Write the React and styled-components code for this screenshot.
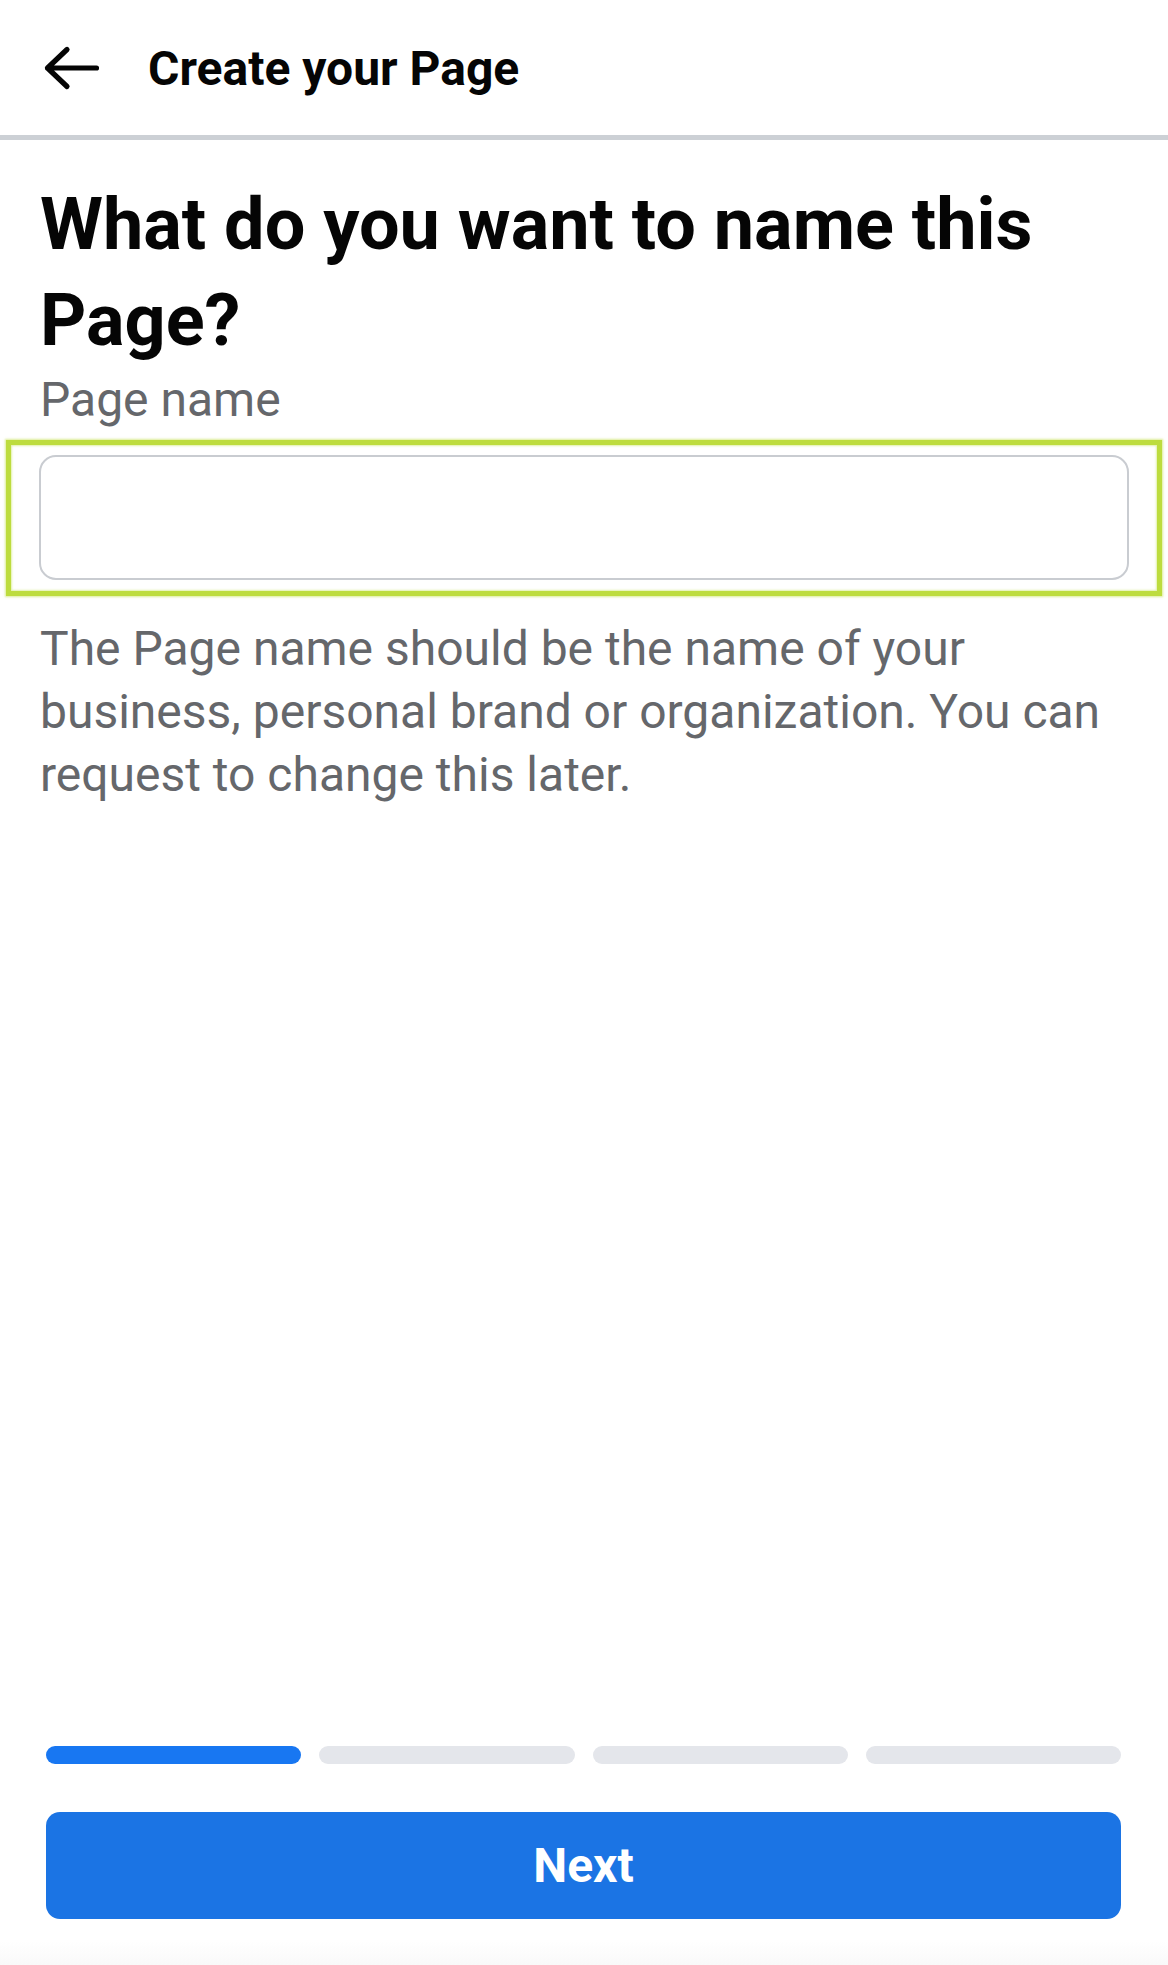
import React from "react";
import styled, { createGlobalStyle } from "styled-components";

const GlobalStyle = createGlobalStyle`
  html, body { margin: 0; padding: 0; background: #ffffff; }
  body { font-family: Roboto, "Noto Sans", "Liberation Sans", sans-serif; -webkit-font-smoothing: antialiased; }
  * { box-sizing: border-box; }
`;

const Screen = styled.div`
  width: 1168px;
  min-height: 1965px;
  display: flex;
  flex-direction: column;
  background: #ffffff;
`;

const Header = styled.header`
  height: 140px;
  display: flex;
  align-items: center;
  padding: 0 0 0 43px;
  border-bottom: 5px solid #ccd0d5;
`;

const BackButton = styled.button`
  width: 58px;
  height: 48px;
  padding: 0;
  border: none;
  background: transparent;
  display: flex;
  align-items: center;
  justify-content: center;
  margin-right: 47px;
  cursor: pointer;
`;

const HeaderTitle = styled.h1`
  margin: 0;
  font-size: 48px;
  font-weight: 700;
  color: #050505;
  line-height: 1;
  padding-top: 2px;
`;

const Content = styled.main`
  display: flex;
  flex-direction: column;
  padding: 37px 39px 0 40px;
`;

const Heading = styled.h2`
  margin: 0;
  font-size: 72px;
  line-height: 96px;
  font-weight: 700;
  color: #050505;
`;

const Label = styled.label`
  margin-top: 1px;
  font-size: 48px;
  line-height: 60px;
  color: #65676b;
`;

const Highlight = styled.div`
  margin: 10px -33px 0 -34px;
  padding: 10px 28px 11px;
  border: 5px solid #bddc3e;
  box-shadow: 0 0 2px 1px rgba(189, 220, 62, 0.55), inset 0 0 2px 1px rgba(189, 220, 62, 0.45);
`;

const TextInput = styled.input`
  display: block;
  width: 100%;
  height: 125px;
  border: 2.5px solid #c9ccd1;
  border-radius: 17px;
  background: #ffffff;
  outline: none;
  padding: 0 36px;
  font-family: inherit;
  font-size: 48px;
  color: #050505;
`;

const Helper = styled.p`
  margin: 21px 0 0;
  font-size: 48px;
  line-height: 63px;
  color: #65676b;
`;

const Footer = styled.footer`
  margin-top: auto;
  padding: 0 47px 46px 46px;
  display: flex;
  flex-direction: column;
  gap: 48px;
  background: linear-gradient(to bottom, #ffffff calc(100% - 24px), #f9f9f9 100%);
`;

const Steps = styled.div`
  display: grid;
  grid-template-columns: repeat(4, 1fr);
  gap: 18px;
`;

const Step = styled.div`
  height: 18px;
  border-radius: 9px;
  background: ${(p) => (p.$active ? "#1877f2" : "#e4e6eb")};
`;

const NextButton = styled.button`
  height: 107px;
  border: none;
  border-radius: 14px;
  background: #1b74e4;
  color: #ffffff;
  font-family: inherit;
  font-size: 48px;
  font-weight: 700;
  cursor: pointer;
`;

const BackArrow = () => (
  <svg width="58" height="48" viewBox="0 0 58 48" fill="none">
    <path
      d="M4.5 24 H53.5 M24 5.5 L4.5 24 L24 42.5"
      stroke="#050505"
      strokeWidth="5.2"
      strokeLinecap="round"
      strokeLinejoin="round"
    />
  </svg>
);

export default function App() {
  return (
    <>
      <GlobalStyle />
      <Screen>
        <Header>
          <BackButton aria-label="Back">
            <BackArrow />
          </BackButton>
          <HeaderTitle>Create your Page</HeaderTitle>
        </Header>
        <Content>
          <Heading>What do you want to name this Page?</Heading>
          <Label htmlFor="page-name">Page name</Label>
          <Highlight>
            <TextInput id="page-name" type="text" />
          </Highlight>
          <Helper>
            The Page name should be the name of your business, personal brand or organization. You can request to change this later.
          </Helper>
        </Content>
        <Footer>
          <Steps>
            <Step $active />
            <Step />
            <Step />
            <Step />
          </Steps>
          <NextButton>Next</NextButton>
        </Footer>
      </Screen>
    </>
  );
}
